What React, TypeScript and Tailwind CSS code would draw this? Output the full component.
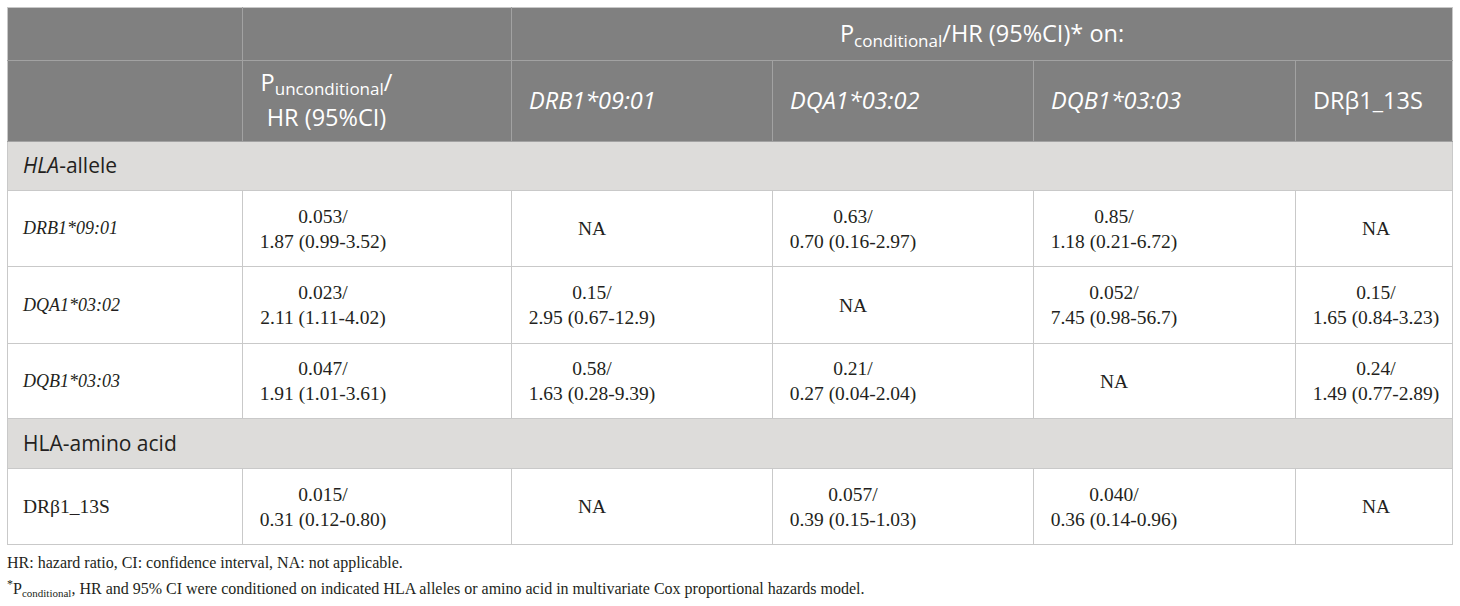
import React from 'react';

type Cell = { p: string; hr: string } | null;

const rows: { label: string; cells: Cell[] }[] = [
  {
    label: 'DRB1*09:01',
    cells: [
      { p: '0.053/', hr: '1.87 (0.99-3.52)' },
      null,
      { p: '0.63/', hr: '0.70 (0.16-2.97)' },
      { p: '0.85/', hr: '1.18 (0.21-6.72)' },
      null,
    ],
  },
  {
    label: 'DQA1*03:02',
    cells: [
      { p: '0.023/', hr: '2.11 (1.11-4.02)' },
      { p: '0.15/', hr: '2.95 (0.67-12.9)' },
      null,
      { p: '0.052/', hr: '7.45 (0.98-56.7)' },
      { p: '0.15/', hr: '1.65 (0.84-3.23)' },
    ],
  },
  {
    label: 'DQB1*03:03',
    cells: [
      { p: '0.047/', hr: '1.91 (1.01-3.61)' },
      { p: '0.58/', hr: '1.63 (0.28-9.39)' },
      { p: '0.21/', hr: '0.27 (0.04-2.04)' },
      null,
      { p: '0.24/', hr: '1.49 (0.77-2.89)' },
    ],
  },
];

const aminoRow: Cell[] = [
  { p: '0.015/', hr: '0.31 (0.12-0.80)' },
  null,
  { p: '0.057/', hr: '0.39 (0.15-1.03)' },
  { p: '0.040/', hr: '0.36 (0.14-0.96)' },
  null,
];

const sans = "font-['Open_Sans',sans-serif]";
const serif = "font-['Liberation_Serif',serif]";

const ValueCell: React.FC<{ cell: Cell }> = ({ cell }) => (
  <td className="border border-[#c9c9c9] pl-[14px] align-middle">
    <div className="w-[132px] text-center text-[19.5px] leading-[25px] text-[#231f20]">
      {cell ? (
        <>
          <div>{cell.p}</div>
          <div>{cell.hr}</div>
        </>
      ) : (
        <div>NA</div>
      )}
    </div>
  </td>
);

const App: React.FC = () => {
  return (
    <div className={`min-h-screen bg-white pt-[7px] pl-[7px] ${serif}`}>
      <table className="table-fixed border-collapse w-[1445px]">
        <colgroup>
          <col className="w-[235px]" />
          <col className="w-[269px]" />
          <col className="w-[261px]" />
          <col className="w-[261px]" />
          <col className="w-[262px]" />
          <col className="w-[157px]" />
        </colgroup>
        <thead className={`${sans} bg-[#808080] text-white text-[23.5px]`}>
          <tr className="h-[53px]">
            <th className="border border-[#a2a2a2] border-t-[#c8c8c8] border-l-[#c8c8c8]" />
            <th className="border border-[#a2a2a2] border-t-[#c8c8c8]" />
            <th colSpan={4} className="border border-[#a2a2a2] border-t-[#c8c8c8] border-r-[#c8c8c8] font-normal text-center">
              P<sub className="text-[17px] leading-none">conditional</sub>/HR (95%CI)* on:
            </th>
          </tr>
          <tr className="h-[81px]">
            <th className="border border-[#a2a2a2] border-l-[#c8c8c8]" />
            <th className="border border-[#a2a2a2] pl-[15px] pb-[3px] font-normal text-left">
              <div className="w-[137px] text-center">
                <div className="leading-[26px]">
                  P<sub className="text-[17px] leading-none">unconditional</sub>/
                </div>
                <div className="leading-[26px] mt-[9px]">HR (95%CI)</div>
              </div>
            </th>
            <th className="border border-[#a2a2a2] pl-[17px] font-normal italic text-left">DRB1*09:01</th>
            <th className="border border-[#a2a2a2] pl-[17px] font-normal italic text-left">DQA1*03:02</th>
            <th className="border border-[#a2a2a2] pl-[17px] font-normal italic text-left">DQB1*03:03</th>
            <th className="border border-[#a2a2a2] border-r-[#c8c8c8] pl-[17px] font-normal text-left">DRβ1_13S</th>
          </tr>
        </thead>
        <tbody>
          <tr className="h-[49px] bg-[#dddcda]">
            <td colSpan={6} className={`border border-[#c9c9c9] pl-[15px] ${sans} text-[21px] text-[#231f20]`}>
              <i>HLA</i>-allele
            </td>
          </tr>
          {rows.map((row, i) => (
            <tr key={row.label} className={i === 1 ? 'h-[77px]' : i === 2 ? 'h-[75px]' : 'h-[76px]'}>
              <td className="border border-[#c9c9c9] pl-[15px] italic text-[18px] text-[#231f20]">{row.label}</td>
              {row.cells.map((c, j) => (
                <ValueCell key={j} cell={c} />
              ))}
            </tr>
          ))}
          <tr className="h-[50px] bg-[#dddcda]">
            <td colSpan={6} className={`border border-[#c9c9c9] pl-[15px] ${sans} text-[21px] text-[#231f20]`}>
              HLA-amino acid
            </td>
          </tr>
          <tr className="h-[76px]">
            <td className="border border-[#c9c9c9] pl-[15px] text-[19.5px] text-[#231f20]">DRβ1_13S</td>
            {aminoRow.map((c, j) => (
              <ValueCell key={j} cell={c} />
            ))}
          </tr>
        </tbody>
      </table>
      <div className="mt-[5px] text-[16px] leading-[26px] text-[#231f20]">
        <p>HR: hazard ratio, CI: confidence interval, NA: not applicable.</p>
        <p>
          <sup>*</sup>P<sub className="text-[11px]">conditional</sub>, HR and 95% CI were conditioned on indicated HLA alleles or amino acid in
          multivariate Cox proportional hazards model.
        </p>
      </div>
    </div>
  );
};

export default App;
